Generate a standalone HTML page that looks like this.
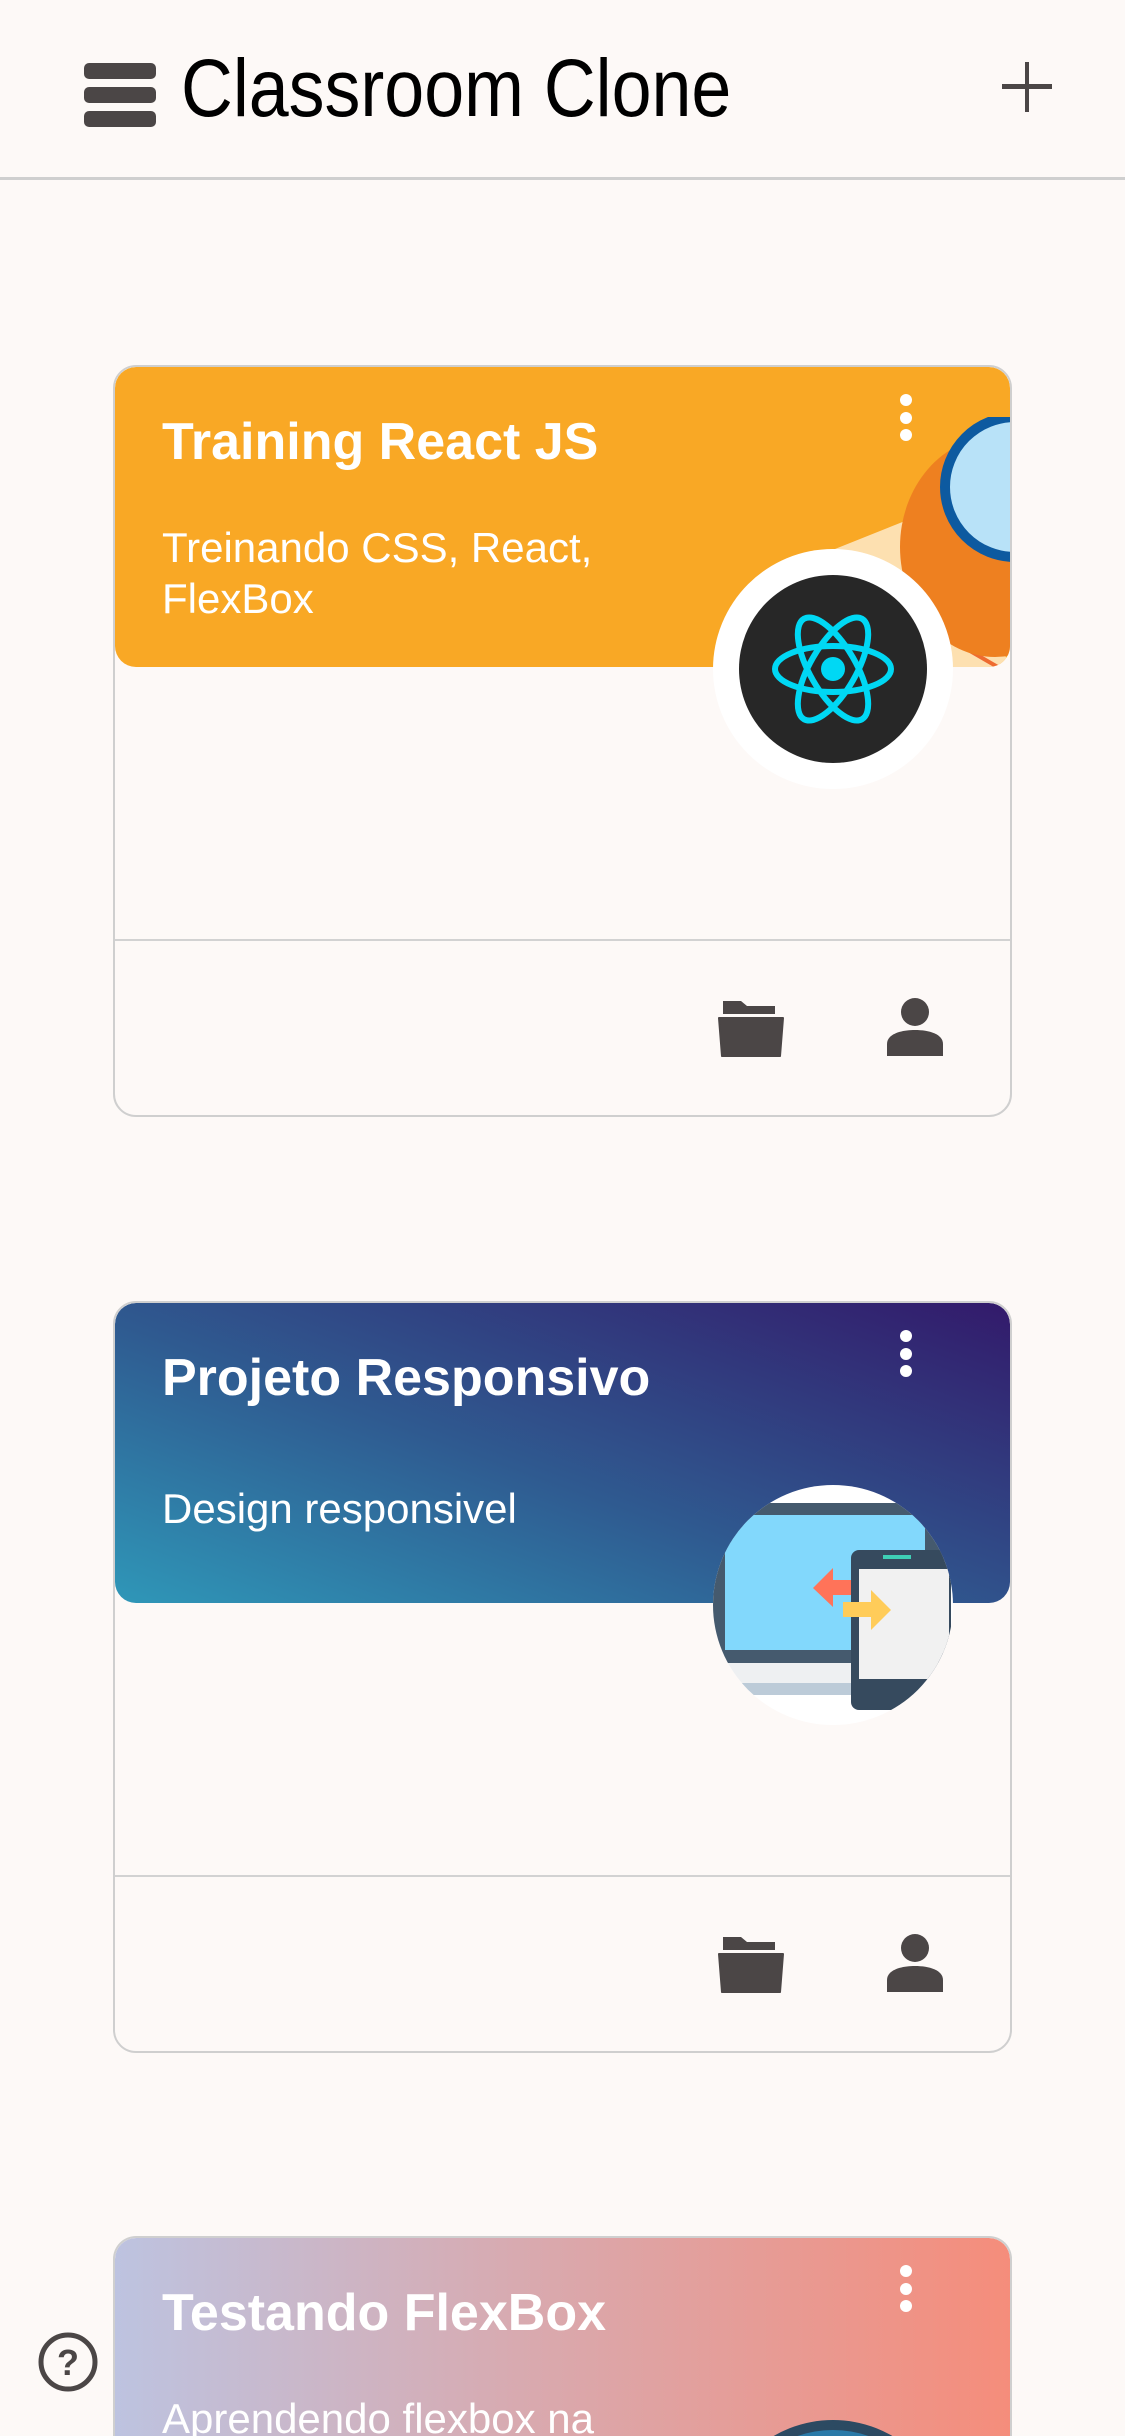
<!DOCTYPE html>
<html><head><meta charset="utf-8"><style>
*{margin:0;padding:0;box-sizing:border-box}
html,body{width:1125px;height:2436px;overflow:hidden}
body{background:#fdf9f7;font-family:"Liberation Sans",Arial,sans-serif;position:relative}
#wrap{position:relative;width:1125px;height:2436px;overflow:hidden}
.hdr{position:absolute;left:0;top:0;width:1125px;height:180px;border-bottom:3px solid #cfcfcf}
.bar{position:absolute;left:84px;width:72px;height:16px;border-radius:5px;background:#4b4646}
.title{position:absolute;left:181px;top:42px;font-size:82px;color:#000;white-space:nowrap;transform:scaleX(0.875);transform-origin:left top}
.card{position:absolute;left:113px;width:899px;height:752px;border:2px solid #cfcfcf;border-radius:23px;overflow:hidden}
.top{position:absolute;left:0;top:0;width:895px;height:300px;border-radius:21px;overflow:hidden}
.ct{position:absolute;left:47px;top:45px;font-size:52px;font-weight:bold;color:#fff;white-space:nowrap}
.cs{position:absolute;left:47px;font-size:42px;color:#fff;line-height:51px}
.dot{position:absolute;left:785px;width:12px;height:12px;border-radius:50%;background:#fff}
.div{position:absolute;left:0;top:572px;width:895px;height:2px;background:#d2d2d2}
.av{position:absolute;left:598px;top:182px;width:240px;height:240px;border-radius:50%;background:#fff;overflow:hidden}
.ic{position:absolute;top:630px}
</style></head><body><div id="wrap">
<div class="hdr">
<div class="bar" style="top:63px"></div><div class="bar" style="top:87px"></div><div class="bar" style="top:111px"></div>
<div class="title">Classroom Clone</div>
<div style="position:absolute;left:1025px;top:62px;width:4px;height:50px;background:#4b4646"></div>
<div style="position:absolute;left:1002px;top:84px;width:50px;height:5px;background:#4b4646"></div>
</div>

<!-- card 1 -->
<div class="card" style="top:365px">
<div class="top" style="background:#f9a825">
<svg style="position:absolute;left:550px;top:50px" width="350" height="260">
<polygon points="150,200 260,150 350,250 150,270" fill="#fde0b0"/>
<polygon points="150,140 250,100 350,200 330,260 200,260" fill="#fde0b0"/>
<line x1="160" y1="150" x2="350" y2="260" stroke="#ee6b30" stroke-width="4"/>
<ellipse cx="330" cy="130" rx="95" ry="110" fill="#ee8020"/>
<circle cx="350" cy="70" r="70" fill="#b8e2f8" stroke="#0d5aa0" stroke-width="10"/>
</svg>
<div class="ct">Training React JS</div>
<div class="cs" style="top:155px">Treinando CSS, React,<br>FlexBox</div>
<div class="dot" style="top:27px"></div><div class="dot" style="top:45px"></div><div class="dot" style="top:62px"></div>
</div>
<div class="av">
<svg width="240" height="240" viewBox="0 0 240 240">
<circle cx="120" cy="120" r="94" fill="#272727"/>
<g fill="none" stroke="#00d8f4" stroke-width="6">
<ellipse cx="120" cy="120" rx="58" ry="23"/>
<ellipse cx="120" cy="120" rx="58" ry="23" transform="rotate(60 120 120)"/>
<ellipse cx="120" cy="120" rx="58" ry="23" transform="rotate(-60 120 120)"/>
</g><circle cx="120" cy="120" r="12" fill="#00d8f4"/>
</svg></div>
<div class="div"></div>
<svg class="ic" style="left:602px" width="68" height="60" viewBox="0 0 68 60"><path d="M6 4h18l6 5h28v8H6z" fill="#4b4646"/><path d="M2 21h64l-3 38H5z" fill="#4b4646" stroke="#4b4646" stroke-linejoin="round" stroke-width="2"/></svg>
<svg class="ic" style="left:770px" width="60" height="60" viewBox="0 0 60 60"><circle cx="30" cy="15" r="14" fill="#4b4646"/><path d="M2 59v-12c0-10 14-14 28-14s28 4 28 14v12z" fill="#4b4646"/></svg>
</div>

<!-- card 2 -->
<div class="card" style="top:1301px">
<div class="top" style="background:linear-gradient(20deg,#2f97b8 0%,#2f5a90 45%,#331a6b 100%)">
<div class="ct">Projeto Responsivo</div>
<div class="cs" style="top:180px">Design responsivel</div>
<div class="dot" style="top:27px"></div><div class="dot" style="top:45px"></div><div class="dot" style="top:62px"></div>
</div>
<div class="av">
<svg width="240" height="240" viewBox="0 0 240 240">
<rect x="0" y="18" width="230" height="160" fill="#455a6e"/>
<rect x="12" y="30" width="200" height="135" fill="#82d8fc"/>
<rect x="0" y="178" width="240" height="22" fill="#eef0f2"/>
<rect x="0" y="198" width="240" height="12" fill="#bccbd8"/>
<rect x="138" y="65" width="100" height="160" rx="8" fill="#364a5e"/>
<rect x="146" y="84" width="90" height="110" fill="#f1f1f1"/>
<rect x="170" y="70" width="28" height="4" fill="#3ecfb5"/>
<polygon points="100,103 120,83 120,95 138,95 138,110 120,110 120,122" fill="#ff7359"/>
<polygon points="178,125 158,105 158,117 130,117 130,132 158,132 158,145" fill="#ffcc59"/>
</svg></div>
<div class="div"></div>
<svg class="ic" style="left:602px" width="68" height="60" viewBox="0 0 68 60"><path d="M6 4h18l6 5h28v8H6z" fill="#4b4646"/><path d="M2 21h64l-3 38H5z" fill="#4b4646" stroke="#4b4646" stroke-linejoin="round" stroke-width="2"/></svg>
<svg class="ic" style="left:770px" width="60" height="60" viewBox="0 0 60 60"><circle cx="30" cy="15" r="14" fill="#4b4646"/><path d="M2 59v-12c0-10 14-14 28-14s28 4 28 14v12z" fill="#4b4646"/></svg>
</div>

<!-- card 3 -->
<div class="card" style="top:2236px;height:200px;border-bottom:none;border-radius:23px 23px 0 0">
<div class="top" style="background:linear-gradient(90deg,#bdc3e0 0%,#d8aab0 45%,#f58d7b 100%)">
<div class="ct">Testando FlexBox</div>
<div class="cs" style="top:155px">Aprendendo flexbox na</div>
<div class="dot" style="top:27px"></div><div class="dot" style="top:45px"></div><div class="dot" style="top:62px"></div>
</div>
<div style="position:absolute;left:600px;top:182px;width:236px;height:236px;border-radius:50%;background:#2a7aa8;border:10px solid #2c4a62"></div>
</div>

<svg style="position:absolute;left:36px;top:2330px" width="64" height="64" viewBox="0 0 64 64">
<circle cx="32" cy="32" r="27" fill="none" stroke="#4b4646" stroke-width="5"/>
<text x="32" y="45" text-anchor="middle" font-family="Liberation Sans" font-weight="bold" font-size="36" fill="#4b4646">?</text>
</svg>
</div></body></html>
